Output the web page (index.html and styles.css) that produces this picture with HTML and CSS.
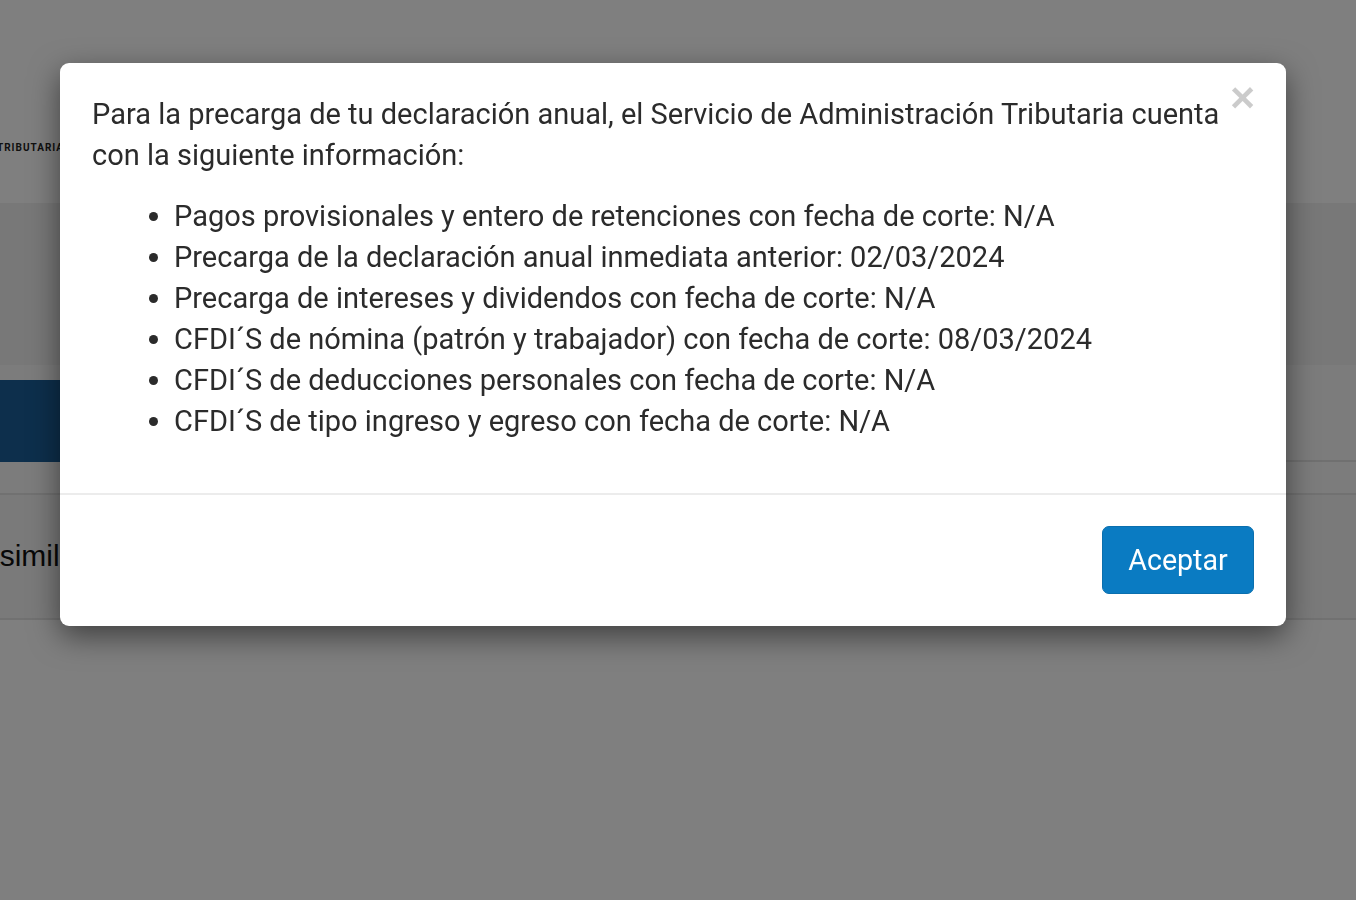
FILE: index.html
```
<!DOCTYPE html>
<html lang="es">
<head>
<meta charset="utf-8">
<title>Declaración anual</title>
<link rel="stylesheet" href="styles.css">
</head>
<body>
<div class="page">
  <header class="site-header">
    <span class="brand">TRIBUTARIA</span>
  </header>
  <section class="band band-hero"></section>
  <section class="band band-tabs">
    <div class="tab-active"></div>
  </section>
  <div class="row row-thin"></div>
  <div class="row row-item"><span class="row-text">asimilados a salarios</span></div>
  <div class="rest"></div>
</div>

<div class="backdrop"></div>

<div class="modal" role="dialog">
  <div class="modal-body">
    <button class="close" type="button" aria-label="Cerrar">×</button>
    <p class="intro">Para la precarga de tu declaración anual, el Servicio de Administración Tributaria cuenta con la siguiente información:</p>
    <ul class="info-list">
      <li>Pagos provisionales y entero de retenciones con fecha de corte: N/A</li>
      <li>Precarga de la declaración anual inmediata anterior: 02/03/2024</li>
      <li>Precarga de intereses y dividendos con fecha de corte: N/A</li>
      <li>CFDI´S de nómina (patrón y trabajador) con fecha de corte: 08/03/2024</li>
      <li>CFDI´S de deducciones personales con fecha de corte: N/A</li>
      <li>CFDI´S de tipo ingreso y egreso con fecha de corte: N/A</li>
    </ul>
  </div>
  <div class="modal-footer">
    <button class="btn-primary" type="button">Aceptar</button>
  </div>
</div>
</body>
</html>
```

FILE: styles.css
```
* { box-sizing: border-box; }

html, body {
  margin: 0;
  padding: 0;
}

body {
  font-family: Roboto, "Liberation Sans", Arial, sans-serif;
  color: #333;
  background: #fdfdfd;
  overflow: hidden;
}

.page {
  display: flex;
  flex-direction: column;
  height: 900px;
}

.site-header {
  height: 203px;
  background: #ffffff;
  display: flex;
  align-items: center;
  padding-top: 92px;
}

.brand {
  font-size: 10px;
  font-weight: 700;
  letter-spacing: 1px;
  color: #222;
  margin-left: -3px;
  line-height: 1;
}

.band-hero {
  height: 162px;
  background: #f0f0f0;
}

.band-tabs {
  height: 97px;
  background: #f8f8f8;
  border-bottom: 2px solid #e0e0e0;
  padding-top: 15px;
}

.tab-active {
  width: 140px;
  height: 82px;
  background: #1a5e98;
}

.row-thin {
  height: 33px;
  background: #f8f8f8;
  border-bottom: 2px solid #e3e3e3;
}

.row-item {
  height: 125px;
  background: #f5f5f5;
  border-bottom: 2px solid #e3e3e3;
  display: flex;
  align-items: center;
  padding-bottom: 2px;
  overflow: hidden;
}

.row-text {
  font-family: "Liberation Sans", Arial, sans-serif;
  font-size: 30px;
  color: #111;
  margin-left: -17px;
  white-space: nowrap;
}

.rest {
  flex: 1;
  background: #fefefe;
}

.backdrop {
  position: fixed;
  inset: 0;
  background: #000;
  opacity: 0.5;
}

.modal {
  position: absolute;
  left: 60px;
  top: 63px;
  width: 1226px;
  background: #fff;
  border-radius: 9px;
  box-shadow: 0 10px 30px rgba(0, 0, 0, 0.5);
}

.modal-body {
  padding: 31px 31px 31px 32px;
  font-size: 29px;
  line-height: 41px;
  color: #2b2b2b;
}

.intro {
  margin: 0 0 20px;
}

.close {
  float: right;
  margin-top: -18px;
  padding: 0;
  border: 0;
  background: transparent;
  font-family: "Liberation Sans", Arial, sans-serif;
  font-size: 43px;
  font-weight: 700;
  line-height: 1;
  color: #000;
  opacity: 0.2;
  cursor: pointer;
}

.info-list {
  margin: 0 0 20px;
  padding-left: 82px;
}

.modal-footer {
  border-top: 2px solid #ececec;
  padding: 31px 32px 32px;
  display: flex;
  justify-content: flex-end;
}

.btn-primary {
  width: 152px;
  height: 68px;
  border: 1px solid #0a6fae;
  border-radius: 7px;
  background: #0a7bc2;
  color: #fff;
  font-family: Roboto, "Liberation Sans", Arial, sans-serif;
  font-size: 28.6px;
  line-height: 1;
  padding: 0;
  cursor: pointer;
}
```
